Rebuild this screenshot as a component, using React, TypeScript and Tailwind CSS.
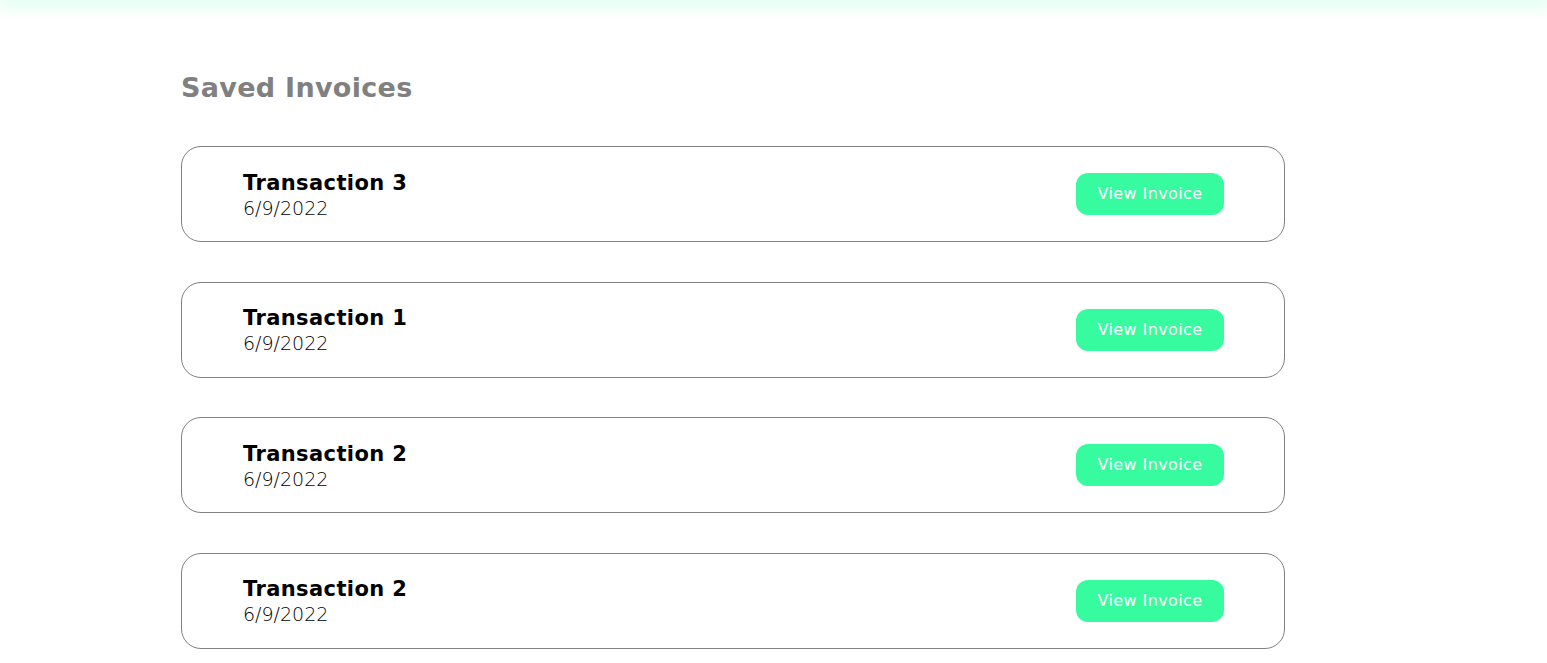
const invoices = [
  { name: 'Transaction 3', date: '6/9/2022' },
  { name: 'Transaction 1', date: '6/9/2022' },
  { name: 'Transaction 2', date: '6/9/2022' },
  { name: 'Transaction 2', date: '6/9/2022' },
];

export default function App() {
  return (
    <div className="min-h-screen bg-white font-['DejaVu_Sans',sans-serif]">
      <div className="h-0 w-full shadow-[0_0_16px_4px_rgba(55,253,158,0.28)]" />
      <div className="pl-[181px] pt-[71px]">
        <h1 className="text-[27px] font-bold leading-[34px] text-[#808080] tracking-[0.3px]">
          Saved Invoices
        </h1>
        <div className="mt-[41px] flex w-[1104px] flex-col gap-[39.67px]">
          {invoices.map((inv, i) => (
            <div
              key={i}
              className="flex h-[96px] items-center justify-between rounded-[20px] border border-[#808080] pl-[61px] pr-[60px]"
            >
              <div className="flex flex-col pt-[3px] text-black">
                <span className="text-[21px] font-bold leading-[25px] tracking-[0.4px]">{inv.name}</span>
                <span className="text-[19px] font-light leading-[25px] text-black">{inv.date}</span>
              </div>
              <button className="flex h-[42px] w-[148px] items-center justify-center rounded-[12px] bg-[#37fc9f] text-[16px] tracking-[0.4px] text-white">
                View Invoice
              </button>
            </div>
          ))}
        </div>
      </div>
    </div>
  );
}
